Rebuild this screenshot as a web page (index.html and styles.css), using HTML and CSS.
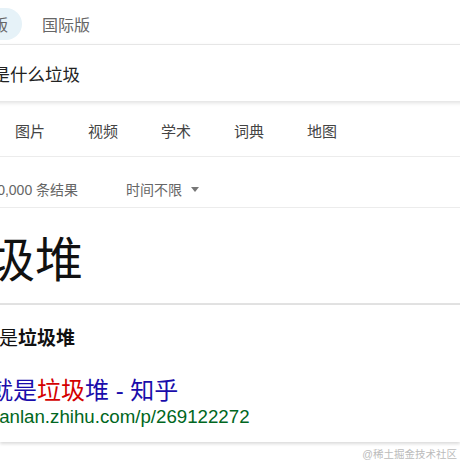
FILE: index.html
```html
<!DOCTYPE html>
<html lang="zh-CN">

<head>
    <meta charset="UTF-8">
    <meta name="viewport" content="width=device-width, initial-scale=1.0">
    <title>你是什么垃圾 - 搜索</title>
    <link rel="stylesheet" href="styles.css">
</head>

<body>
    <!-- 国内版 / 国际版 切换 -->
    <div class="tabs">
        <span class="tab active">国内版</span>
        <span class="tab">国际版</span>
    </div>

    <!-- 搜索框 -->
    <div class="searchbox">
        <span class="query">你是什么垃圾</span>
    </div>

    <!-- 分类导航 -->
    <nav class="nav">
        <a href="#">图片</a>
        <a href="#">视频</a>
        <a href="#">学术</a>
        <a href="#">词典</a>
        <a href="#">地图</a>
    </nav>

    <div class="count-row">
        <span class="count">约 2,340,000 条结果</span>
        <span class="filter">时间不限<i class="caret"></i></span>
    </div>

    <!-- 答案 -->
    <div class="answer">
        <div class="big">垃圾堆</div>
    </div>

    <div class="card">
        <p class="snippet">你就是<b>垃圾堆</b></p>
        <h2 class="title"><a href="#">你就是<em>垃圾</em>堆 - 知乎</a></h2>
        <cite class="url">zhuanlan.zhihu.com/p/269122272</cite>
    </div>

    <div class="watermark">@稀土掘金技术社区</div>
</body>

</html>
```
FILE: styles.css
```css
body {
    margin: 0;
    width: 460px;
    height: 460px;
    overflow: hidden;
    background-color: #fff;
    font-family: "Liberation Sans", "Noto Sans CJK SC", sans-serif;
    color: #222;
}

/* 顶部切换 */
.tabs {
    display: flex;
    gap: 6px;
    height: 44px;
    padding-top: 8px;
    box-sizing: border-box;
    margin-left: -54px;
}

.tab {
    display: flex;
    align-items: center;
    height: 32px;
    padding: 0 14px;
    border-radius: 16px;
    font-size: 16px;
    color: #666;
}

.tab.active {
    background-color: #e6f2f8;
}

/* 搜索框 */
.searchbox {
    display: flex;
    align-items: center;
    height: 57px;
    margin: 0 -10px;
    padding: 0 10px;
    border-top: 1px solid #e6e6e6;
    box-sizing: border-box;
    box-shadow: 0 2px 4px rgba(0, 0, 0, 0.12);
    position: relative;
}

.query {
    font-size: 17.5px;
    margin-left: -25px;
    color: #222;
}

/* 导航 */
.nav {
    display: flex;
    align-items: center;
    gap: 43px;
    height: 56px;
    padding: 3px 0 0 15px;
    box-sizing: border-box;
    border-bottom: 1px solid #ececec;
}

.nav a {
    font-size: 15px;
    color: #444;
    text-decoration: none;
}

.count-row {
    display: flex;
    align-items: center;
    height: 51px;
    padding-top: 14px;
    box-sizing: border-box;
    border-bottom: 1px solid #ececec;
    font-size: 14px;
    color: #666;
}

.count {
    margin-left: -48px;
}

.filter {
    display: flex;
    align-items: center;
    margin-left: 48px;
}

.caret {
    width: 0;
    height: 0;
    margin-left: 9px;
    border-left: 4px solid transparent;
    border-right: 4px solid transparent;
    border-top: 5px solid #777;
}

/* 大字答案 */
.answer {
    display: flex;
    align-items: center;
    height: 97px;
    border-bottom: 2px solid #e2e2e2;
    box-sizing: border-box;
}

.big {
    font-size: 48px;
    color: #111;
    margin-left: -61px;
}

.card {
    padding: 22px 0 14px;
    box-shadow: 0 2px 3px rgba(0, 0, 0, 0.14);
}

.snippet {
    margin: 0 0 0 -39px;
    font-size: 19px;
    line-height: 24px;
    color: #111;
}

.snippet b {
    font-weight: bold;
}

.title {
    margin: 25px 0 0 -35px;
    font-size: 24px;
    font-weight: normal;
    line-height: 30px;
}

.title a {
    color: #1a0dab;
    text-decoration: none;
}

.title em {
    font-style: normal;
    color: #d40000;
}

.url {
    display: block;
    margin-left: -31px;
    font-size: 18.7px;
    line-height: 22px;
    font-style: normal;
    color: #006621;
}

.watermark {
    text-align: right;
    padding: 4px 3px 0 0;
    font-size: 10.5px;
    color: #bbb;
}
```
